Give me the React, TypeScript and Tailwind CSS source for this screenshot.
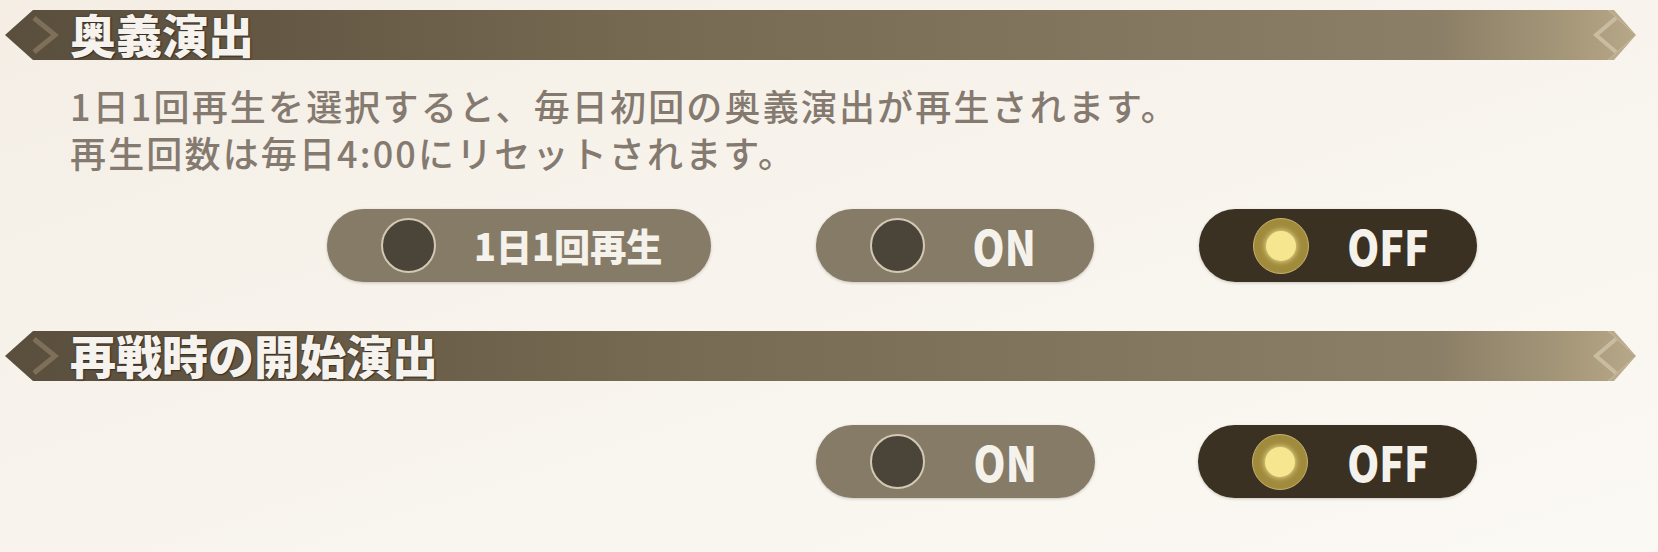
import React from 'react';

const font = "font-['Noto_Sans_CJK_JP','Noto_Sans',sans-serif]";

const SectionHeader: React.FC<{ title: string; className?: string }> = ({ title, className = '' }) => (
    <div className={`relative ml-[5px] mr-[22px] h-[50px] ${className}`}>
        <div className="absolute inset-0 [clip-path:polygon(28px_0,calc(100%_-_28px)_0,100%_50%,calc(100%_-_28px)_100%,28px_100%,0_50%)] bg-[linear-gradient(90deg,#5a4e3c_0%,#5e5240_8%,#766a52_40%,#8c7f67_88%,#a69879_96%,#b6a888_100%)]" />
        <svg className="absolute left-0 top-0 h-[50px] w-[60px]" viewBox="0 0 60 50">
            <polyline points="29,8 50,25 29,42" fill="none" stroke="#7d6f58" strokeWidth="5" />
        </svg>
        <svg className="absolute right-0 top-0 h-[50px] w-[60px]" viewBox="0 0 60 50">
            <polygon points="60,25 32,0 38,0 60,25 38,50 32,50" fill="#b9ab8c" />
            <polyline points="40,8 20,25 40,42" fill="none" stroke="#c9bda1" strokeWidth="4" />
        </svg>
        <div className="relative flex h-full items-center pb-[4px] pl-[65px]">
            <span className="text-[46px] font-black leading-none text-[#f6f3ee] [text-shadow:0_0_2px_#3a3024,1px_1px_1px_#3a3024]">
                {title}
            </span>
        </div>
    </div>
);

interface PillProps {
    label: string;
    active?: boolean;
    width: string;
    big?: boolean;
}

const Pill: React.FC<PillProps> = ({ label, active = false, width, big = false }) => (
    <div
        className={`flex h-[73px] items-center rounded-full pl-[54px] pr-[10px] shadow-[0_1px_3px_rgba(60,50,35,0.25)] ${width} ${
            active ? 'bg-[#3b3122]' : 'bg-[#857b67]'
        }`}
    >
        {active ? (
            <div className="flex h-[56px] w-[56px] shrink-0 items-center justify-center rounded-full border border-[#c8b46c] bg-[#a08a3c]">
                <div className="h-[30px] w-[30px] rounded-full bg-[#f6e690] shadow-[0_0_6px_#fff2a8]" />
            </div>
        ) : (
            <div className="h-[55px] w-[55px] shrink-0 rounded-full border-2 border-[#d2c8b4] bg-[#4b4439]" />
        )}
        <div className="flex-1 text-center">
            <span
                className={`inline-block font-black leading-none text-[#f5f2ec] ${
                    big ? 'text-[38px] scale-x-95' : 'text-[48px] scale-x-85'
                }`}
            >
                {label}
            </span>
        </div>
    </div>
);

export default function App() {
    return (
        <div className={`h-[552px] w-[1658px] overflow-hidden bg-gradient-to-br from-[#f4eee5] via-[#f8f4ed] to-[#fbf9f4] pt-[10px] ${font}`}>
            <SectionHeader title="奥義演出" />
            <div className="mt-[22px] pl-[70px] text-[36px] font-medium leading-[47px] tracking-[0.06em] text-[#857a70]">
                <p>1日1回再生を選択すると、毎日初回の奥義演出が再生されます。</p>
                <p>再生回数は毎日4:00にリセットされます。</p>
            </div>
            <div className="mt-[33px] flex justify-end gap-[105px] pr-[181px]">
                <Pill label="1日1回再生" width="w-[384px]" big />
                <Pill label="ON" width="w-[278px]" />
                <Pill label="OFF" width="w-[278px]" active />
            </div>
            <SectionHeader title="再戦時の開始演出" className="mt-[49px]" />
            <div className="mt-[44px] flex justify-end gap-[103px] pr-[181px]">
                <Pill label="ON" width="w-[279px]" />
                <Pill label="OFF" width="w-[279px]" active />
            </div>
        </div>
    );
}
